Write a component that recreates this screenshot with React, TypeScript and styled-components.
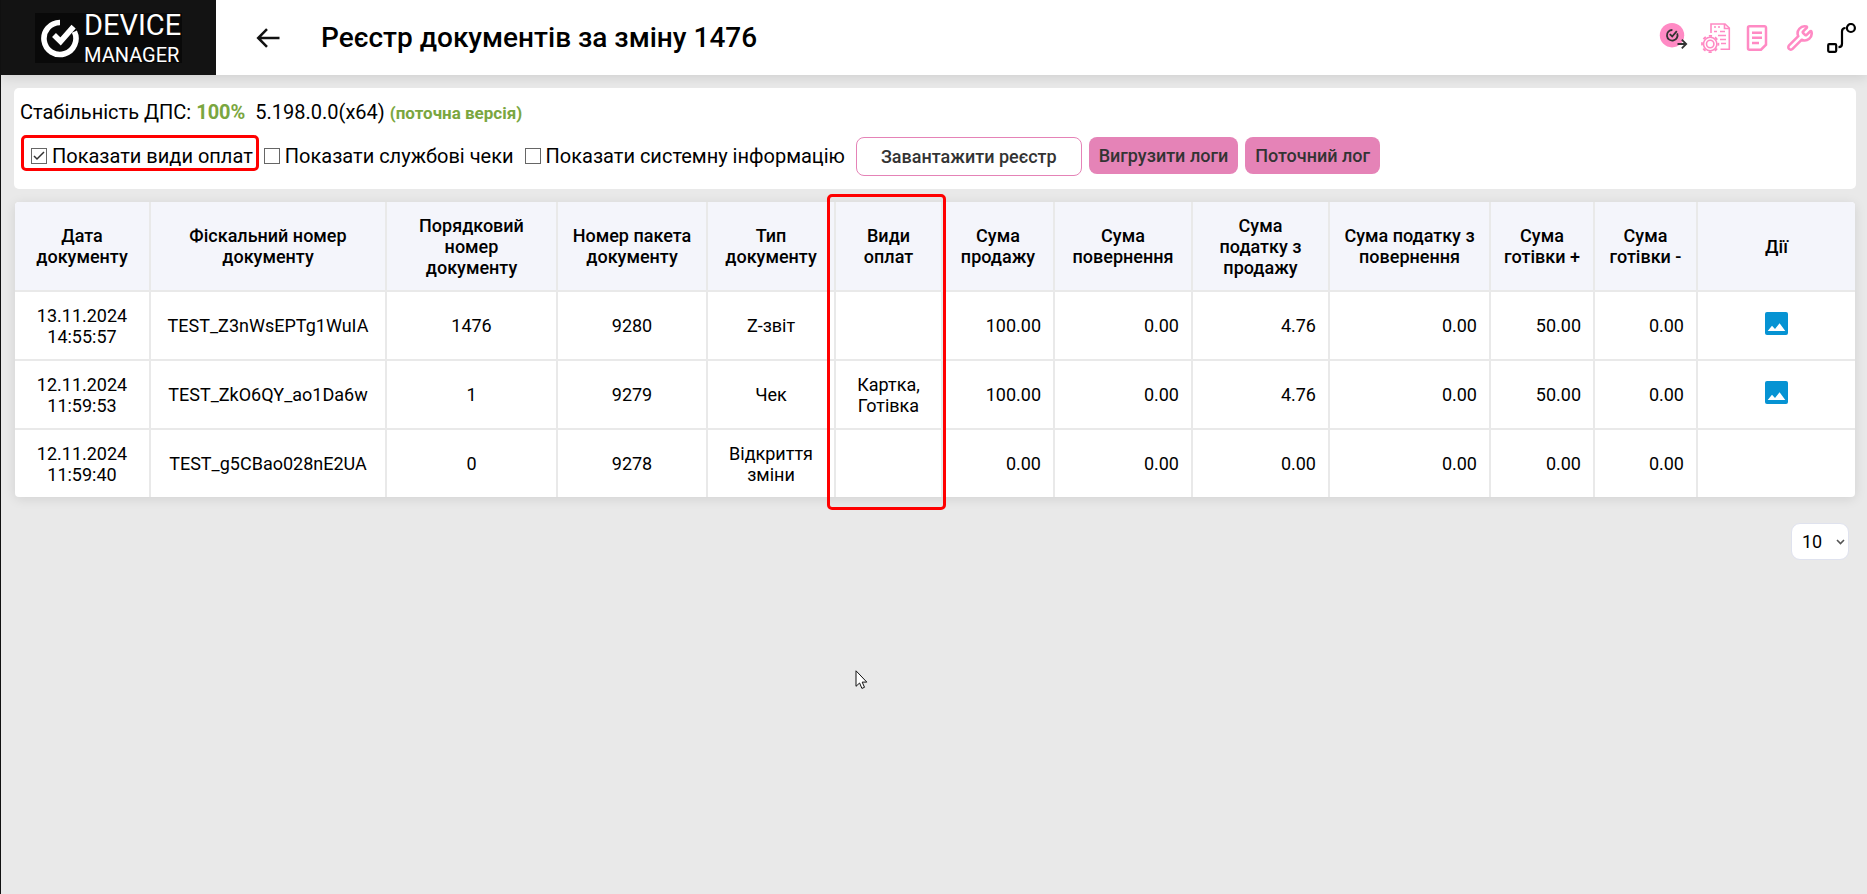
import React, { useState } from "react";
import styled, { createGlobalStyle } from "styled-components";
import { Wrench } from "lucide-react";

const PINK = "#ff8ac4";

const GlobalStyle = createGlobalStyle`
  *, *::before, *::after { box-sizing: border-box; }
  html { background: #e9e9e9; }
  body {
    margin: 0;
    color: #000;
    font-family: Roboto, "Noto Sans", sans-serif;
    font-size: 20px;
  }
`;

const Page = styled.div`
  position: relative;
  min-height: 100vh;
  border-left: 1px solid #111;
  background: #e9e9e9;
`;

const Header = styled.header`
  display: flex;
  align-items: center;
  height: 75px;
  padding-right: 10px;
  background: #fff;
  box-shadow: 0 2px 12px rgba(0, 0, 0, 0.12);
`;

const Brand = styled.a`
  display: flex;
  align-items: center;
  width: 215px;
  height: 75px;
  padding-left: 34px;
  background: #131313;
  color: #fff;
  text-decoration: none;
`;

const BrandPlate = styled.span`
  display: flex;
  align-items: center;
  width: 147px;
  height: 50px;
  padding-left: 5px;
  gap: 4px;
  background: #090909;
`;

const BrandText = styled.span`
  display: flex;
  flex-direction: column;
`;

const BrandLine = styled.span<{ $large?: boolean }>`
  font-size: ${(p) => (p.$large ? 29 : 20)}px;
  line-height: ${(p) => (p.$large ? 35 : 25)}px;
`;

const BackButton = styled.button`
  display: flex;
  margin: 0 40px;
  padding: 0;
  border: 0;
  background: none;
  cursor: pointer;
`;

const Title = styled.h1`
  flex: 1;
  margin: 0;
  font-size: 28px;
  font-weight: 500;
  line-height: 30px;
`;

const Tools = styled.nav`
  display: flex;
  gap: 12px;
`;

const ToolButton = styled.button`
  display: flex;
  align-items: center;
  justify-content: center;
  width: 30px;
  height: 30px;
  padding: 0;
  border: 0;
  background: none;
  cursor: pointer;
`;

const Main = styled.main`
  padding: 13px 11px 0 13px;
`;

const Panel = styled.section`
  padding: 12px 6px 13px;
  border-radius: 5px;
  background: #fff;
`;

const Status = styled.p`
  margin: 0 0 12px;
  line-height: 24px;
  white-space: pre-wrap;
`;

const Good = styled.strong<{ $small?: boolean }>`
  color: #7aa640;
  font-size: ${(p) => (p.$small ? 17 : 20)}px;
  font-weight: 700;
`;

const Controls = styled.div`
  display: flex;
  flex-wrap: wrap;
  align-items: flex-start;
  gap: 7px;
`;

const Option = styled.label<{ $marked?: boolean }>`
  position: relative;
  display: flex;
  align-items: center;
  gap: 5px;
  height: 37px;
  margin-left: ${(p) => (p.$marked ? 11 : 0)}px;
  margin-right: 4px;
  line-height: 24px;

  &::after {
    content: "";
    display: ${(p) => (p.$marked ? "block" : "none")};
    position: absolute;
    inset: -2px -6px 3px -10px;
    border: 3px solid #f00;
    border-radius: 5px;
    pointer-events: none;
  }
`;

const Tick = styled.input`
  appearance: none;
  width: 16px;
  height: 16px;
  margin: 0;
  border: 1px solid #666;
  background: #fff center / 14px 14px no-repeat;

  &:checked {
    background-image: url("data:image/svg+xml,%3Csvg xmlns='http://www.w3.org/2000/svg' viewBox='0 0 14 14'%3E%3Cpath d='M2 7l3 3 7-7' fill='none' stroke='%23333' stroke-width='1.5'/%3E%3C/svg%3E");
  }
`;

const Button = styled.button<{ $outline?: boolean }>`
  height: ${(p) => (p.$outline ? 39 : 37)}px;
  padding: 0 ${(p) => (p.$outline ? 24 : 10)}px;
  border: ${(p) => (p.$outline ? "1px solid #e583b7" : "0")};
  border-radius: 8px;
  background: ${(p) => (p.$outline ? "#fff" : "#e583b7")};
  color: #333;
  font-family: inherit;
  font-size: 18px;
  font-weight: 500;
  cursor: pointer;
`;

const TableArea = styled.div`
  position: relative;
  margin: 13px 1px 0;
`;

const Table = styled.table`
  width: 100%;
  table-layout: fixed;
  border-spacing: 0;
  border-radius: 4px;
  background: #fff;
  box-shadow: 0 2px 12px rgba(0, 0, 0, 0.1);
  font-size: 18px;
  line-height: 21px;
  overflow: hidden;
`;

const HeadCell = styled.th`
  height: 90px;
  padding: 0 12px;
  border-right: 2px solid #e9e9e9;
  border-bottom: 2px solid #e9e9e9;
  background: #f4f5fb;
  font-weight: 500;

  &:last-child { border-right: 0; }
`;

const Cell = styled.td<{ $numeric?: boolean }>`
  height: 69px;
  padding: 0 12px;
  border-right: 2px solid #e9e9e9;
  border-bottom: 2px solid #e9e9e9;
  text-align: ${(p) => (p.$numeric ? "right" : "center")};

  &:last-child { border-right: 0; }
  tr:last-child > & { height: 67px; border-bottom: 0; }
`;

const ImageButton = styled.button`
  padding: 0;
  border: 0;
  background: none;
  cursor: pointer;
  vertical-align: middle;

  svg { display: block; margin-bottom: 4px; }
`;

const ColumnMark = styled.div<{ $start: number; $span: number }>`
  position: absolute;
  top: -8px;
  bottom: -13px;
  left: calc(${(p) => p.$start * 100}% - 9px);
  width: calc(${(p) => p.$span * 100}% + 12px);
  border: 3px solid #f00;
  border-radius: 5px;
  pointer-events: none;
`;

const Footer = styled.footer`
  display: flex;
  justify-content: flex-end;
  padding: 26px 7px 0;
`;

const SelectBox = styled.div`
  position: relative;

  svg {
    position: absolute;
    right: 4px;
    top: 15px;
    pointer-events: none;
  }
`;

const PageSize = styled.select`
  appearance: none;
  width: 58px;
  height: 37px;
  padding: 0 10px;
  border: 1px solid #dfe2ee;
  border-radius: 9px;
  background: #fff;
  color: #000;
  font-family: inherit;
  font-size: 18px;
`;

const Pointer = styled.svg`
  position: absolute;
  left: 854px;
  top: 670px;
  pointer-events: none;
`;

type Column = { label: string; width: number; numeric?: boolean };

const columns: Column[] = [
  { label: "Дата документу", width: 136 },
  { label: "Фіскальний номер документу", width: 236 },
  { label: "Порядковий номер документу", width: 171 },
  { label: "Номер пакета документу", width: 150 },
  { label: "Тип документу", width: 128 },
  { label: "Види оплат", width: 107 },
  { label: "Сума продажу", width: 112, numeric: true },
  { label: "Сума повернення", width: 138, numeric: true },
  { label: "Сума податку з продажу", width: 137, numeric: true },
  { label: "Сума податку з повернення", width: 161, numeric: true },
  { label: "Сума готівки +", width: 104, numeric: true },
  { label: "Сума готівки -", width: 103, numeric: true },
  { label: "Дії", width: 157 },
];

const rows = [
  { image: true, cells: ["13.11.2024 14:55:57", "TEST_Z3nWsEPTg1WuIA", "1476", "9280", "Z-звіт", "", "100.00", "0.00", "4.76", "0.00", "50.00", "0.00"] },
  { image: true, cells: ["12.11.2024 11:59:53", "TEST_ZkO6QY_ao1Da6w", "1", "9279", "Чек", "Картка, Готівка", "100.00", "0.00", "4.76", "0.00", "50.00", "0.00"] },
  { image: false, cells: ["12.11.2024 11:59:40", "TEST_g5CBao028nE2UA", "0", "9278", "Відкриття зміни", "", "0.00", "0.00", "0.00", "0.00", "0.00", "0.00"] },
];

const MARKED = 5;
const total = columns.reduce((sum, c) => sum + c.width, 0);
const markStart = columns.slice(0, MARKED).reduce((sum, c) => sum + c.width, 0) / total;

const LogoMark = () => (
  <svg width="40" height="40" viewBox="0 0 40 40" fill="none" stroke="#fff" aria-hidden="true">
    <path d="M20 4.5A16 16 0 1 0 34.4 13.6" strokeWidth="5.6" />
    <path d="M14 17l6.6 6.4L33.6 8.6" strokeWidth="5.6" />
  </svg>
);

const BackArrow = () => (
  <svg width="25" height="22" viewBox="0 0 25 22" fill="none" stroke="#111" strokeWidth="2.5" aria-hidden="true">
    <path d="M23.5 11H2M11 2.2L2.2 11l8.8 8.8" />
  </svg>
);

const ExportIcon = () => (
  <svg width="30" height="30" viewBox="0 0 30 30" fill="none" stroke="#333" aria-hidden="true">
    <circle cx="13" cy="12.2" r="12.2" fill={PINK} stroke="none" />
    <path d="M13.4 7A5.3 5.3 0 1 0 18.2 10.4" strokeWidth="1.8" />
    <path d="M10.8 11.2l2.4 2.3 4.6-5.3" strokeWidth="1.8" />
    <path d="M18.5 21h8.6M22.8 16.6l4.4 4.4-4.4 4.4" strokeWidth="1.8" />
  </svg>
);

const ReportGearIcon = () => (
  <svg width="30" height="30" viewBox="0 0 30 30" fill="none" stroke={PINK} aria-hidden="true">
    <path d="M10 10V1h14l4.3 4v21.2H19.5" strokeWidth="1.6" />
    <path d="M23.5 1v4.5h4.8" strokeWidth="1.6" />
    <path d="M13 4h2M17 4h2M19 8.5h5M13 8.5h3M17 12.5h8M19 16.5h6M20 20.5h5" strokeWidth="1.7" />
    <circle cx="9.2" cy="21" r="6.7" strokeWidth="1.6" />
    <circle cx="9.2" cy="21" r="3.7" strokeWidth="1.6" />
    <circle cx="9.2" cy="21" r="8.2" strokeWidth="1.8" strokeDasharray="3.2 3.24" strokeDashoffset="1.6" />
  </svg>
);

const DocumentIcon = () => (
  <svg width="30" height="30" viewBox="0 0 30 30" fill="none" stroke={PINK} strokeWidth="2.5" aria-hidden="true">
    <path d="M6.5 3.2h15a1.5 1.5 0 0 1 1.5 1.5v17l-5 5H6.5A1.5 1.5 0 0 1 5 25.2V4.7a1.5 1.5 0 0 1 1.5-1.5z" />
    <path d="M9 9.7h10M9 14.8h10M9 19.9h7" />
  </svg>
);

const RouteIcon = () => (
  <svg width="30" height="30" viewBox="0 0 30 30" fill="none" stroke="#000" strokeWidth="2.2" aria-hidden="true">
    <rect x="1.2" y="21.2" width="8" height="7.6" rx="1" />
    <circle cx="23.9" cy="5" r="4" />
    <path d="M11.5 24.2c2.3 0 3.5-1.2 3.5-3.5V8.5c0-2.3 1.2-3.5 3.5-3.5" />
  </svg>
);

const PictureIcon = () => (
  <svg width="23" height="23" viewBox="0 0 23 23" aria-hidden="true">
    <rect width="23" height="23" rx="2" fill="#0693d3" />
    <path d="M2.7 19l4.3-5.3 3 3.4 4.6-5.8 5.7 7.7z" fill="#fff" />
  </svg>
);

export default function App() {
  const [showPayments, setShowPayments] = useState(true);
  const [showService, setShowService] = useState(false);
  const [showSystem, setShowSystem] = useState(false);

  return (
    <>
      <GlobalStyle />
      <Page>
        <Header>
          <Brand href="#">
            <BrandPlate>
              <LogoMark />
              <BrandText>
                <BrandLine $large>DEVICE</BrandLine>
                <BrandLine>MANAGER</BrandLine>
              </BrandText>
            </BrandPlate>
          </Brand>
          <BackButton aria-label="Назад"><BackArrow /></BackButton>
          <Title>Реєстр документів за зміну 1476</Title>
          <Tools>
            <ToolButton aria-label="Перехід"><ExportIcon /></ToolButton>
            <ToolButton aria-label="Звіти"><ReportGearIcon /></ToolButton>
            <ToolButton aria-label="Документи"><DocumentIcon /></ToolButton>
            <ToolButton aria-label="Налаштування"><Wrench size={28} color={PINK} strokeWidth={2.2} /></ToolButton>
            <ToolButton aria-label="Маршрут"><RouteIcon /></ToolButton>
          </Tools>
        </Header>

        <Main>
          <Panel>
            <Status>
              Стабільність ДПС: <Good>100%</Good>{"  "}5.198.0.0(x64) <Good $small>(поточна версія)</Good>
            </Status>
            <Controls>
              <Option $marked>
                <Tick type="checkbox" checked={showPayments} onChange={(e) => setShowPayments(e.target.checked)} />
                Показати види оплат
              </Option>
              <Option>
                <Tick type="checkbox" checked={showService} onChange={(e) => setShowService(e.target.checked)} />
                Показати службові чеки
              </Option>
              <Option>
                <Tick type="checkbox" checked={showSystem} onChange={(e) => setShowSystem(e.target.checked)} />
                Показати системну інформацію
              </Option>
              <Button $outline>Завантажити реєстр</Button>
              <Button>Вигрузити логи</Button>
              <Button>Поточний лог</Button>
            </Controls>
          </Panel>

          <TableArea>
            <Table>
              <colgroup>
                {columns.map((c) => <col key={c.label} width={c.width} />)}
              </colgroup>
              <thead>
                <tr>
                  {columns.map((c) => <HeadCell key={c.label} scope="col">{c.label}</HeadCell>)}
                </tr>
              </thead>
              <tbody>
                {rows.map((row) => (
                  <tr key={row.cells[1]}>
                    {row.cells.map((text, i) => (
                      <Cell key={columns[i].label} $numeric={columns[i].numeric}>{text}</Cell>
                    ))}
                    <Cell>
                      {row.image && <ImageButton aria-label="Переглянути зображення"><PictureIcon /></ImageButton>}
                    </Cell>
                  </tr>
                ))}
              </tbody>
            </Table>
            <ColumnMark $start={markStart} $span={columns[MARKED].width / total} />
          </TableArea>

          <Footer>
            <SelectBox>
              <PageSize aria-label="Рядків на сторінці" defaultValue="10">
                <option>10</option>
                <option>25</option>
                <option>50</option>
              </PageSize>
              <svg width="9" height="8" viewBox="0 0 9 8" fill="none" stroke="#555" strokeWidth="1.6" aria-hidden="true">
                <path d="M1 2l3.5 3.5L8 2" />
              </svg>
            </SelectBox>
          </Footer>
        </Main>

        <Pointer width="13" height="20" viewBox="0 0 13 20" aria-hidden="true">
          <path d="M1 .8v15.5l3.6-3.3 2.3 5.4 2.6-1.1-2.3-5.2h4.6z" fill="#fff" stroke="#111" strokeWidth="1" />
        </Pointer>
      </Page>
    </>
  );
}
